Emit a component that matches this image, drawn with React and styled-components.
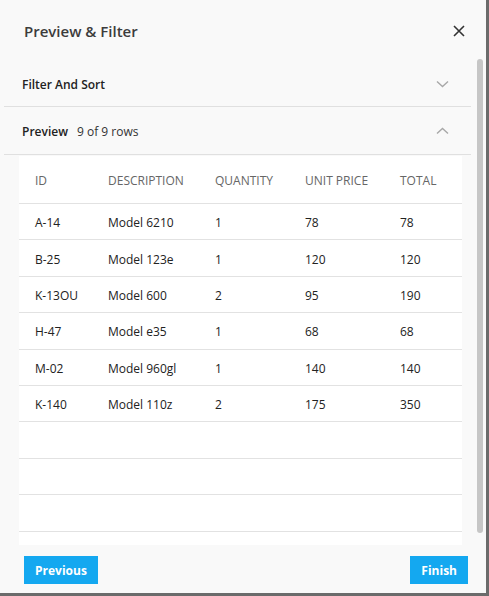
import React from "react";
import styled, { createGlobalStyle } from "styled-components";

const GlobalStyle = createGlobalStyle`
  html, body {
    margin: 0;
    padding: 0;
    background: #f9f9f9;
  }
  * {
    box-sizing: border-box;
  }
`;

const Dialog = styled.div`
  width: 489px;
  height: 596px;
  display: flex;
  flex-direction: column;
  background: #f9f9f9;
  border-right: 3px solid #6b6b6b;
  border-bottom: 3px solid #6b6b6b;
  font-family: "Open Sans", "Noto Sans", sans-serif;
  color: #222;
  overflow: hidden;
`;

const Header = styled.header`
  height: 59px;
  flex: none;
  display: flex;
  align-items: center;
  justify-content: space-between;
  padding: 2px 20px 0 24px;
`;

const Title = styled.h1`
  margin: 0;
  font-size: 15px;
  font-weight: 600;
  color: #3c3c3c;
`;

const CloseButton = styled.button`
  border: none;
  background: none;
  padding: 0;
  width: 14px;
  height: 14px;
  display: flex;
  color: #333;
  cursor: pointer;
`;

const Body = styled.div`
  flex: 1;
  min-height: 0;
  display: flex;
`;

const Content = styled.div`
  width: 471px;
  padding-left: 4px;
  display: flex;
  flex-direction: column;
  overflow: hidden;
`;

const ScrollTrack = styled.div`
  width: 6px;
  margin: 0 0 12px 6px;
  background: #c6c6c6;
  border-radius: 3px;
`;

const Section = styled.div`
  height: 48px;
  flex: none;
  display: flex;
  align-items: center;
  justify-content: space-between;
  padding: ${(p) => (p.$first ? "3px" : "1px")} 22px 0 18px;
  border-bottom: 1px solid #e0e0e0;
`;

const SectionTitle = styled.div`
  display: flex;
  align-items: baseline;
  gap: 9px;
  font-size: 12px;
  font-weight: 600;
  color: #222;
`;

const SectionNote = styled.span`
  font-weight: 400;
  color: #333;
`;

const Chevron = styled.svg`
  width: 13px;
  height: 8px;
  color: #a8a8a8;
`;

const Table = styled.div`
  margin: 1px 9px 0 15px;
  background: #fff;
  flex: 1;
  overflow: hidden;
`;

const Row = styled.div`
  display: grid;
  grid-template-columns: 73px 107px 90px 95px 1fr;
  align-items: center;
  padding: 2px 0 0 16px;
  height: ${(p) => (p.$head ? "48px" : "36.4px")};
  border-bottom: 1px solid #e2e2e2;
  font-size: 12px;
  color: ${(p) => (p.$head ? "#666" : "#222")};
`;

const Footer = styled.footer`
  height: 48px;
  flex: none;
  display: flex;
  align-items: center;
  justify-content: space-between;
  padding: 2px 18px 0 24px;
`;

const Button = styled.button`
  height: 28px;
  padding: 0 11px;
  border: none;
  background: #14a8f0;
  color: #fff;
  font-family: "Open Sans", "Noto Sans", sans-serif;
  font-size: 12px;
  font-weight: 700;
  cursor: pointer;
`;

const rows = [
  ["A-14", "Model 6210", "1", "78", "78"],
  ["B-25", "Model 123e", "1", "120", "120"],
  ["K-13OU", "Model 600", "2", "95", "190"],
  ["H-47", "Model e35", "1", "68", "68"],
  ["M-02", "Model 960gl", "1", "140", "140"],
  ["K-140", "Model 110z", "2", "175", "350"],
];

const ChevronDown = () => (
  <Chevron viewBox="0 0 13 8" fill="none">
    <path d="M1 1.5l5.5 5 5.5-5" stroke="currentColor" strokeWidth="1.4" />
  </Chevron>
);

const ChevronUp = () => (
  <Chevron viewBox="0 0 13 8" fill="none">
    <path d="M1 6.5l5.5-5 5.5 5" stroke="currentColor" strokeWidth="1.4" />
  </Chevron>
);

export default function App() {
  return (
    <>
      <GlobalStyle />
      <Dialog>
        <Header>
          <Title>Preview &amp; Filter</Title>
          <CloseButton aria-label="Close">
            <svg viewBox="0 0 14 14" width="14" height="14" fill="none">
              <path d="M2 2l10 10M12 2L2 12" stroke="currentColor" strokeWidth="1.6" />
            </svg>
          </CloseButton>
        </Header>
        <Body>
          <Content>
            <Section $first>
              <SectionTitle>Filter And Sort</SectionTitle>
              <ChevronDown />
            </Section>
            <Section>
              <SectionTitle>
                Preview <SectionNote>9 of 9 rows</SectionNote>
              </SectionTitle>
              <ChevronUp />
            </Section>
            <Table>
              <Row $head>
                <span>ID</span>
                <span>DESCRIPTION</span>
                <span>QUANTITY</span>
                <span>UNIT PRICE</span>
                <span>TOTAL</span>
              </Row>
              {rows.map((r) => (
                <Row key={r[0]}>
                  {r.map((c, i) => (
                    <span key={i}>{c}</span>
                  ))}
                </Row>
              ))}
              <Row />
              <Row />
              <Row />
              <Row />
            </Table>
          </Content>
          <ScrollTrack />
        </Body>
        <Footer>
          <Button>Previous</Button>
          <Button>Finish</Button>
        </Footer>
      </Dialog>
    </>
  );
}
